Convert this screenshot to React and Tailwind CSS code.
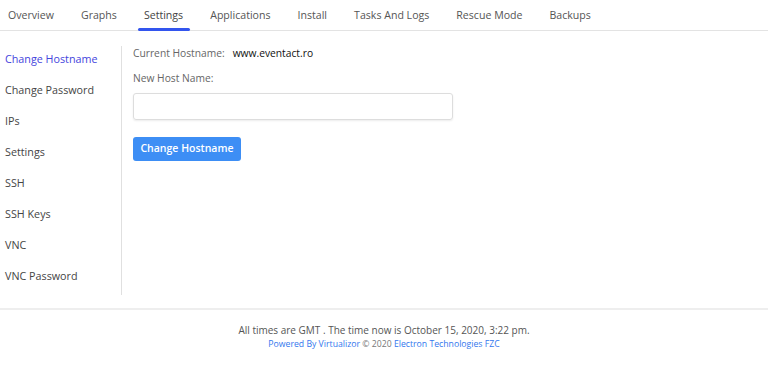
import React from "react";

const tabs = ["Overview", "Graphs", "Settings", "Applications", "Install", "Tasks And Logs", "Rescue Mode", "Backups"];
const side = ["Change Hostname", "Change Password", "IPs", "Settings", "SSH", "SSH Keys", "VNC", "VNC Password"];

export default function App() {
  return (
    <div className="w-[768px] h-[389px] bg-white text-[#555] overflow-hidden" style={{ fontFamily: '"Open Sans", "Noto Sans", sans-serif' }}>
      <div className="flex h-[31px] border-b border-[#e3e3e3] pl-[8px] gap-[27px] text-[10.6px]">
        {tabs.map((t) => (
          <div key={t} className={"relative pt-[8px] " + (t === "Settings" ? "text-[#444]" : "text-[#555]")}>
            {t}
            {t === "Settings" && <div className="absolute left-[-6px] right-[-7px] bottom-[-1px] h-[3px] rounded-full bg-[#3355ee]" />}
          </div>
        ))}
      </div>
      <div className="flex pt-[15px] h-[264px]">
        <div className="w-[122px] border-r border-[#e0e0e0] pl-[5px] text-[10.75px]">
          {side.map((s, i) => (
            <div key={s} className={"h-[31px] pt-[5px] " + (i === 0 ? "text-[#4444dd]" : "text-[#444]")}>{s}</div>
          ))}
        </div>
        <div className="pl-[11px] text-[10.25px]">
          <div className="flex gap-[8px] leading-[15px]">
            <span className="text-[#666]">Current Hostname:</span>
            <span className="text-[#111]">www.eventact.ro</span>
          </div>
          <div className="mt-[10px] text-[#666] leading-[15px]">New Host Name:</div>
          <div className="mt-[7px] w-[320px] h-[27px] border border-[#ddd] rounded-[3px] shadow-[0_1px_2px_rgba(0,0,0,0.08)]" />
          <button className="mt-[17px] w-[108px] h-[24px] rounded-[3px] bg-[#3d8ef5] text-white text-[10.5px] font-semibold">Change Hostname</button>
        </div>
      </div>
      <div className="mt-[13px] h-[2px] bg-[#eeeeee]" />
      <div className="text-center mt-[13px] text-[10px] text-[#555] leading-[14px]">All times are GMT . The time now is October 15, 2020, 3:22 pm.</div>
      <div className="text-center text-[8.7px] leading-[14px] text-[#777]">
        <span className="text-[#3377ee]">Powered By Virtualizor</span> © 2020 <span className="text-[#3377ee]">Electron Technologies FZC</span>
      </div>
    </div>
  );
}
